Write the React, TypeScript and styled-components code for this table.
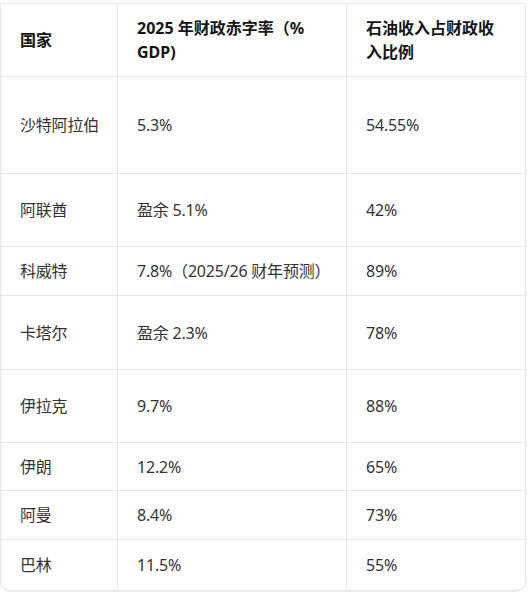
import React from "react";
import styled, { createGlobalStyle } from "styled-components";

const GlobalStyle = createGlobalStyle`
  html, body {
    margin: 0;
    padding: 0;
    background: #ffffff;
  }
  body {
    font-family: "Noto Sans", "Noto Sans CJK SC", sans-serif;
  }
`;

const Page = styled.div`
  width: 530px;
  height: 592px;
  padding-top: 3px;
  box-sizing: border-box;
  overflow: hidden;
`;

const TableWrap = styled.div`
  width: 526px;
  box-sizing: border-box;
  border: 1px solid #e6e6e6;
  border-radius: 0 0 10px 10px;
  overflow: hidden;
  background: #fff;
  box-shadow: 0 1px 1px rgba(0, 0, 0, 0.08);
`;

const Row = styled.div<{ $h: number; $last?: boolean }>`
  display: grid;
  grid-template-columns: 117px 229px 1fr;
  height: ${(p) => p.$h}px;
  box-sizing: border-box;
  border-bottom: ${(p) => (p.$last ? "none" : "1px solid #e6e6e6")};
`;

const Cell = styled.div<{ $head?: boolean }>`
  display: flex;
  align-items: center;
  padding: 0 6px 0 19px;
  box-sizing: border-box;
  border-right: 1px solid #e6e6e6;
  font-size: 16px;
  line-height: 24px;
  white-space: nowrap;
  color: ${(p) => (p.$head ? "#141414" : "#333333")};
  font-weight: ${(p) => (p.$head ? 700 : 400)};
  letter-spacing: ${(p) => (p.$head ? "0" : "-0.2px")};

  &:last-child {
    border-right: none;
  }
`;

type RowData = {
  country: string;
  deficit: string;
  oil: string;
  h: number;
};

const rows: RowData[] = [
  { country: "沙特阿拉伯", deficit: "5.3%", oil: "54.55%", h: 97 },
  { country: "阿联酋", deficit: "盈余 5.1%", oil: "42%", h: 73 },
  { country: "科威特", deficit: "7.8%（2025/26 财年预测）", oil: "89%", h: 49 },
  { country: "卡塔尔", deficit: "盈余 2.3%", oil: "78%", h: 74 },
  { country: "伊拉克", deficit: "9.7%", oil: "88%", h: 73 },
  { country: "伊朗", deficit: "12.2%", oil: "65%", h: 48 },
  { country: "阿曼", deficit: "8.4%", oil: "73%", h: 49 },
  { country: "巴林", deficit: "11.5%", oil: "55%", h: 50 },
];

export default function App() {
  return (
    <Page>
      <GlobalStyle />
      <TableWrap>
        <Row $h={73}>
          <Cell $head>国家</Cell>
          <Cell $head>
            <span>
              2025 年财政赤字率（%
              <br />
              GDP)
            </span>
          </Cell>
          <Cell $head>
            <span>
              石油收入占财政收
              <br />
              入比例
            </span>
          </Cell>
        </Row>
        {rows.map((r, i) => (
          <Row key={r.country} $h={r.h} $last={i === rows.length - 1}>
            <Cell>{r.country}</Cell>
            <Cell>{r.deficit}</Cell>
            <Cell>{r.oil}</Cell>
          </Row>
        ))}
      </TableWrap>
    </Page>
  );
}
